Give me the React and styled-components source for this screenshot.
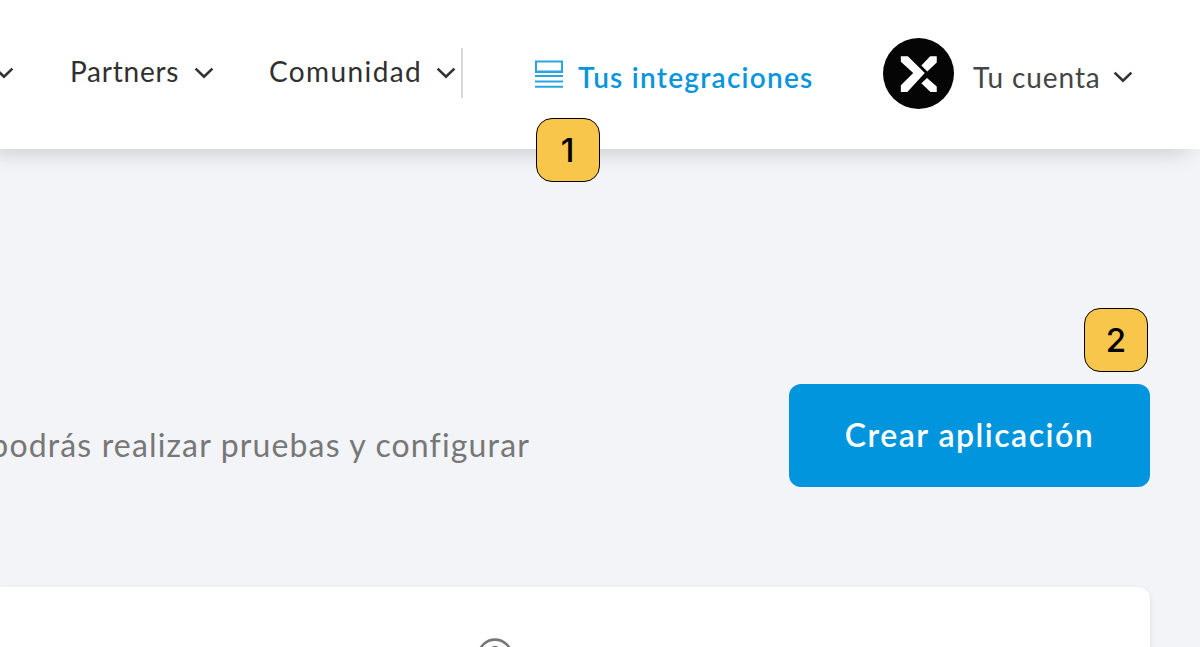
import styled, { createGlobalStyle } from 'styled-components'

const GlobalStyle = createGlobalStyle`
  * {
    box-sizing: border-box;
  }

  body {
    margin: 0;
    overflow: hidden;
    background: #f3f4f7;
    font-family: Lato, "Open Sans", sans-serif;
  }
`

const menus = [
  { label: 'Partners', width: 109, spacing: 0.75, gap: 14, after: 56 },
  { label: 'Comunidad', width: 153, spacing: 1.4, gap: 13, after: 4 }
]

function Chevron() {
  return (
    <ChevronIcon viewBox='0 0 20 12'>
      <path d='M1.6 1.6 L10 9.8 L18.4 1.6' />
    </ChevronIcon>
  )
}

function App() {
  return (
    <Page>
      <GlobalStyle />

      <Header>
        <Menu>
          <Chevron />
          {menus.map((menu) =>
            <MenuItem key={menu.label} $gap={menu.gap} $after={menu.after}>
              <Label $width={menu.width} $spacing={menu.spacing}>{menu.label}</Label>
              <Chevron />
            </MenuItem>
          )}
        </Menu>

        <Integrations href='#'>
          <ListIcon viewBox='0 0 28 29'>
            <rect x='1' y='1.5' width='26' height='10' />
            <path d='M0 12H28M0 16H28M0 21.5H28M0 26.8H28' />
          </ListIcon>
          <Label $width={236} $spacing={1.25} $strong>Tus integraciones</Label>
          <Badge $top={117.5} $left={0.5}>1</Badge>
        </Integrations>

        <Account>
          <Avatar viewBox='0 0 70 70'>
            <circle cx='35' cy='35' r='35' />
            <path d='M17.6 18H24.5L41.2 34.6L24 53.3H17.6V46.5L29.8 34.6L17.6 23.5Z' />
            <path d='M37.8 27.2L46.5 18H53V24.2L43.6 33Z' />
            <path d='M43.4 39.4L53 47.8V53.3H46.8L37.8 44.6Z' />
          </Avatar>
          <Label $width={128} $spacing={0.9} $soft>Tu cuenta</Label>
          <Chevron />
        </Account>
      </Header>

      <Intro>
        <Description>podrás realizar pruebas y configurar</Description>
        <Action>
          <Button>Crear aplicación</Button>
          <Badge $top={-76} $left={295}>2</Badge>
        </Action>
      </Intro>

      <Card>
        <HelpIcon viewBox='0 0 36 36'>
          <circle cx='18' cy='18' r='16.4' />
          <path d='M14 13a4 4 0 1 1 6 3.5q-2 1-2 3.5M18 25v2' />
        </HelpIcon>
      </Card>
    </Page>
  )
}

const Page = styled.div`
  display: flex;
  flex-direction: column;
  width: 1200px;
  height: 647px;
  overflow: hidden;
`

const Header = styled.header`
  display: flex;
  flex: none;
  height: 149px;
  align-items: flex-start;
  background: #fff;
  box-shadow: -9px 6px 20px -2px rgba(20, 25, 30, 0.16), -20px 6px 20px -2px rgba(20, 25, 30, 0.02);
`

const Menu = styled.nav`
  display: flex;
  flex: none;
  width: 463px;
  height: 50px;
  margin-top: 48px;
  align-items: center;
  border-right: 2px solid #d9d9d9;

  > svg {
    margin: 0 56px 0 -6px;
  }
`

const MenuItem = styled.div`
  display: flex;
  flex: none;
  align-items: center;
  gap: ${(props) => props.$gap}px;
  margin-right: ${(props) => props.$after}px;

  span {
    margin-top: -4px;
  }

  svg {
    margin-left: 1px;
    margin-right: -1px;
  }
`

const Label = styled.span`
  flex: none;
  width: ${(props) => props.$width}px;
  font-size: 28px;
  font-weight: ${(props) => props.$strong ? 600 : 400};
  line-height: 34px;
  letter-spacing: ${(props) => props.$spacing}px;
  color: ${(props) => props.$strong ? '#0795dc' : props.$soft ? '#454545' : '#303030'};
  white-space: nowrap;
`

const ChevronIcon = styled.svg`
  flex: none;
  width: 20px;
  height: 12px;
  fill: none;
  stroke: #333;
  stroke-width: 2.6;
`

const Integrations = styled.a`
  position: relative;
  display: flex;
  flex: none;
  height: 149px;
  margin-left: 72px;
  padding-top: 60px;
  align-items: flex-start;
  gap: 15px;
  text-decoration: none;
`

const ListIcon = styled.svg`
  flex: none;
  width: 28px;
  height: 29px;
  fill: none;
  stroke: #2ba5e1;
  stroke-width: 2;
`

const Account = styled.div`
  display: flex;
  flex: none;
  margin: 38px 0 0 69px;
  align-items: center;

  > span {
    margin: 6px 12px 0 19px;
  }

  > svg:last-child {
    margin-top: 6px;
  }
`

const Avatar = styled.svg`
  flex: none;
  width: 71px;
  height: 71px;
  fill: #fff;

  circle {
    fill: #050505;
  }
`

const Badge = styled.span`
  position: absolute;
  top: ${(props) => props.$top}px;
  left: ${(props) => props.$left}px;
  display: flex;
  width: 64px;
  height: 64px;
  align-items: center;
  justify-content: center;
  border: 1.5px solid #000;
  border-radius: 16px;
  background: #f7c64b;
  color: #000;
  font-family: Inter, "Liberation Sans", sans-serif;
  font-size: 33px;
  font-weight: 500;
`

const Intro = styled.section`
  display: flex;
  flex: none;
  height: 438px;
  padding: 235px 50px 0 0;
  align-items: flex-start;
`

const Description = styled.p`
  display: flex;
  width: 530px;
  margin: 41px 259px 0 0;
  justify-content: flex-end;
  flex: none;
  color: #777;
  font-size: 32px;
  line-height: 40px;
  letter-spacing: 1.15px;
  white-space: nowrap;
`

const Action = styled.div`
  position: relative;
  flex: none;
`

const Button = styled.button`
  width: 361px;
  height: 103px;
  padding: 0 0 2px;
  border: 0;
  border-radius: 12px;
  background: #0095dd;
  color: #fff;
  font-family: inherit;
  font-size: 32px;
  font-weight: 600;
  letter-spacing: 1.5px;
`

const Card = styled.section`
  flex: none;
  width: 1150px;
  height: 100px;
  padding: 51px 0 0 477px;
  border-radius: 0 12px 0 0;
  background: #fff;
  box-shadow: 0 2px 5px rgba(0, 0, 0, 0.1);
`

const HelpIcon = styled.svg`
  width: 36px;
  height: 36px;
  fill: none;
  stroke: #777;
  stroke-width: 2.6;
`

export default App
